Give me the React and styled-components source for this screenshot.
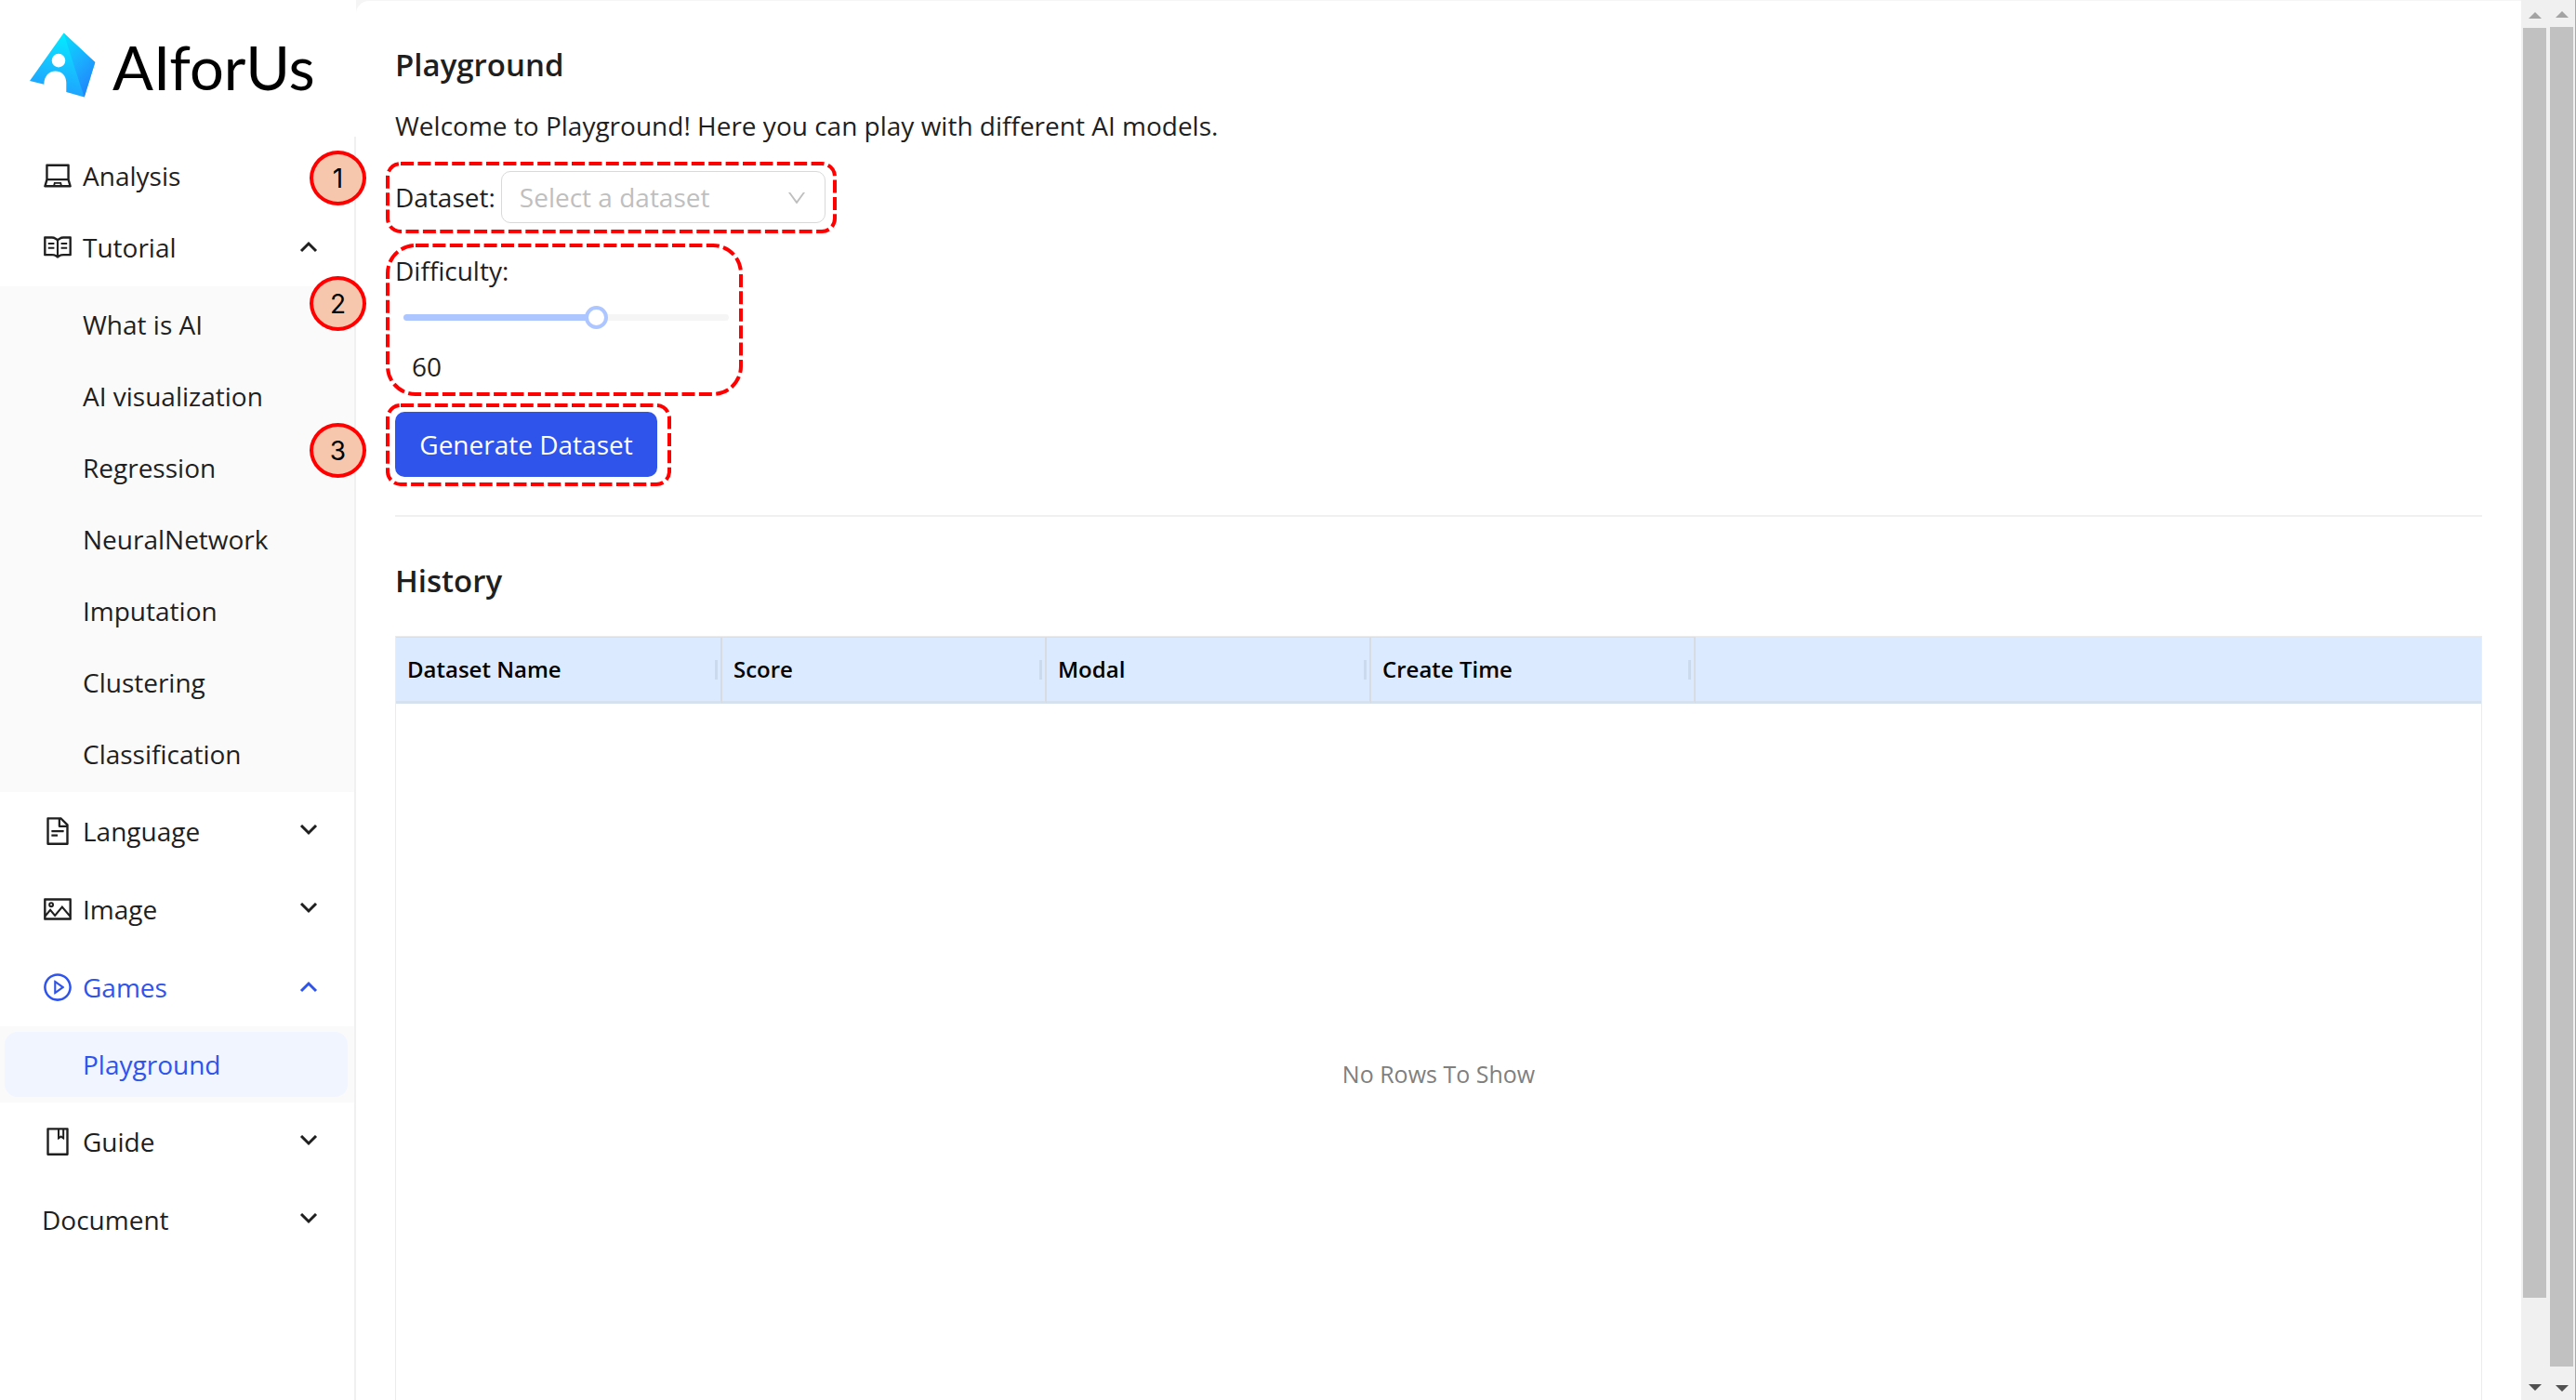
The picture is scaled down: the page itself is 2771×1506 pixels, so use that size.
import React, { useState } from "react";
import styled, { createGlobalStyle, css } from "styled-components";
import {
  AiOutlineLaptop,
  AiOutlineRead,
  AiOutlineFileText,
  AiOutlinePicture,
  AiOutlinePlayCircle,
  AiOutlineBook,
  AiOutlineDown,
} from "react-icons/ai";

const color = {
  text: "#1f1f1f",
  primary: "#2f54eb",
  selected: "#f0f5ff",
  line: "#f0f0f0",
  red: "#ff0000",
};

const GlobalStyle = createGlobalStyle`
  *, *::before, *::after { box-sizing: border-box; }
  body {
    margin: 0;
    overflow: hidden;
    background: #f5f5f5;
    color: ${color.text};
    font-family: "Open Sans", "Noto Sans", sans-serif;
    font-size: 28px;
    line-height: 44px;
  }
  button, input, select { font: inherit; color: inherit; }
`;

const Shell = styled.div`
  display: flex;
  height: 100vh;
  overflow: hidden;
`;

const Sidebar = styled.aside`
  flex: 0 0 383px;
  display: flex;
  flex-direction: column;
  background: #fff;
`;

const Brand = styled.a`
  display: flex;
  align-items: center;
  gap: 18px;
  height: 147px;
  padding: 0 0 8px 32px;
  color: #000;
  text-decoration: none;
`;

const BrandName = styled.span`
  padding-top: 4px;
  font-family: Lato, sans-serif;
  font-size: 65px;
  line-height: 72px;
`;

const Nav = styled.nav`
  flex: 1;
  padding-top: 7px;
  border-right: 2px solid ${color.line};
`;

const Menu = styled.ul`
  margin: 0;
  padding: 0;
  list-style: none;
`;

const MenuGroup = styled.li`
  padding-bottom: ${(p) => (p.$single ? 0 : 7)}px;
  padding-top: ${(p) => (p.$first ? 0 : 7)}px;
`;

const SubMenu = styled.ul`
  display: grid;
  gap: 7px;
  margin: 7px 0 -7px;
  padding: 6px 0;
  list-style: none;
  background: #fafafa;
`;

const itemBox = css`
  display: flex;
  align-items: center;
  gap: 10px;
  height: 70px;
  margin: 0 7px 0 5px;
  padding: 0 32px 0 40px;
  border: 0;
  border-radius: 14px;
  background: ${(p) => (p.$selected ? color.selected : "transparent")};
  color: ${(p) => (p.$active ? color.primary : "inherit")};
  text-align: left;
  text-decoration: none;
`;

const MenuButton = styled.button`
  ${itemBox}
  width: calc(100% - 12px);
  cursor: pointer;
  svg { flex: none; }
`;

const MenuLabel = styled.span`
  flex: 1;
`;

const SubLink = styled.a`
  ${itemBox}
  padding-left: 84px;
`;

const Main = styled.main`
  flex: 1;
  min-width: 0;
  margin-top: 1px;
  padding: 42px 42px 0;
  border-top-left-radius: 14px;
  background: #fff;
`;

const Title = styled.h1`
  margin: 0;
  font-size: 33px;
  font-weight: 600;
  line-height: 54px;
`;

const Intro = styled.p`
  margin: 16px 0 0;
`;

const Form = styled.form`
  display: flex;
  flex-direction: column;
  align-items: flex-start;
  padding-top: 17px;
`;

const Step = styled.div`
  position: relative;
  margin: ${(p) => p.$gap || 0}px 0 0 -10px;
  padding: ${(p) => p.$pad};
  width: ${(p) => p.$width}px;
  height: ${(p) => p.$height}px;
`;

const StepFrame = styled.svg`
  position: absolute;
  inset: 0;
  width: 100%;
  height: 100%;
  overflow: visible;
  pointer-events: none;
  rect {
    x: 2px;
    y: 2px;
    width: calc(100% - 4px);
    height: calc(100% - 4px);
    fill: none;
    stroke: ${color.red};
    stroke-width: 4px;
    stroke-dasharray: 14 4.4;
  }
`;

const StepBadge = styled.span`
  position: absolute;
  left: -82px;
  top: ${(p) => p.$top}px;
  display: grid;
  place-items: center;
  width: 61px;
  height: 59px;
  border: 4px solid ${color.red};
  border-radius: 50%;
  background: #f6c7ad;
  color: #000;
  font-family: Inter, sans-serif;
`;

const Field = styled.div`
  display: flex;
  align-items: center;
  gap: 6px;
`;

const SelectWrap = styled.div`
  position: relative;
  width: 349px;
  color: #bfbfbf;
  svg {
    position: absolute;
    right: 19px;
    top: 17px;
    pointer-events: none;
  }
`;

const Select = styled.select`
  appearance: none;
  width: 100%;
  height: 56px;
  padding: 0 50px 0 19px;
  border: 1px solid #d9d9d9;
  border-radius: 10px;
  background: #fff;
`;

const Range = styled.input`
  appearance: none;
  display: block;
  width: 350px;
  height: 25px;
  margin: 16px 0 0 9px;
  background: transparent;
  &::-webkit-slider-runnable-track {
    height: 7px;
    border-radius: 4px;
    background: linear-gradient(
      to right,
      #adc6ff ${(p) => p.value}%,
      #f5f5f5 ${(p) => p.value}%
    );
  }
  &::-webkit-slider-thumb {
    appearance: none;
    width: 25px;
    height: 25px;
    margin-top: -9px;
    border: 4px solid #adc6ff;
    border-radius: 50%;
    background: #fff;
  }
`;

const RangeLabel = styled.label`
  display: block;
`;

const RangeValue = styled.output`
  display: block;
  margin: 18px 0 0 18px;
`;

const PrimaryButton = styled.button`
  width: 282px;
  height: 70px;
  padding: 0;
  border: 0;
  border-radius: 10px;
  background: ${color.primary};
  color: #fff;
  cursor: pointer;
`;

const Divider = styled.hr`
  height: 2px;
  margin: 31px 0 42px;
  border: 0;
  background: ${color.line};
`;

const Grid = styled.table`
  width: 100%;
  margin-top: 32px;
  border: 1px solid #ececec;
  border-collapse: separate;
  border-spacing: 0;
  table-layout: fixed;
  font-size: 25px;
  line-height: 36px;
`;

const HeadCell = styled.th`
  width: ${(p) => (p.$filler ? "auto" : "349px")};
  height: 72px;
  padding: 0 3px 0 12px;
  border-top: 1px solid ${(p) => (p.$filler ? "#dbeaff" : "#dcdfe2")};
  border-right: ${(p) => (p.$filler ? "0" : "2px solid #d8dbe0")};
  border-bottom: 3px solid #d5e1ef;
  background: #dbeaff;
  color: #000;
  font-size: 24px;
  font-weight: 600;
  text-align: left;
  &:first-child { width: 351px; }
`;

const HeadInner = styled.div`
  display: flex;
  align-items: center;
  justify-content: space-between;
  &::after {
    content: "";
    width: 3px;
    height: 21px;
    background: #cbdaec;
  }
`;

const EmptyCell = styled.td`
  height: 796px;
  padding: 0;
  color: #7f7f7f;
  text-align: center;
`;

const ScrollTrack = styled.div`
  flex: 0 0 ${(p) => p.$width}px;
  display: flex;
  flex-direction: column;
  align-items: center;
  background: #f0f0f0;
`;

const ScrollArrow = styled.svg`
  flex: none;
  width: 14px;
  height: 7px;
  margin: ${(p) => p.$margin};
`;

const ScrollThumb = styled.div`
  flex: 0 1 ${(p) => p.$size}%;
  width: 25px;
  background: #c1c1c1;
`;

const ScrollRest = styled.div`
  flex: 1;
`;

const WindowEdge = styled.div`
  flex: 0 0 1px;
  background: #a9a9a9;
`;

const BrandMark = () => (
  <svg width="71" height="70" viewBox="0 0 71 70" aria-hidden="true">
    <defs>
      <linearGradient id="face" x1="0.65" y1="0" x2="0.4" y2="1">
        <stop offset="0" stopColor="#00f0ff" />
        <stop offset="0.5" stopColor="#16c4ff" />
        <stop offset="1" stopColor="#1f9dff" />
      </linearGradient>
      <linearGradient id="side" x1="0.1" y1="0" x2="0.6" y2="1">
        <stop offset="0" stopColor="#04dcfb" />
        <stop offset="0.5" stopColor="#1ab0ff" />
        <stop offset="1" stopColor="#1f86fb" />
      </linearGradient>
    </defs>
    <path
      fill="url(#face)"
      fillRule="evenodd"
      d="M36.500 0.500L70.300 32L58.700 69.500L39.300 64V54C39.300 46 34 41.500 27.500 41.500C20.500 41.500 15.500 47 15.300 55.800L0 52ZM31 22.800A7.300 7.300 0 1 0 31 37.400A7.300 7.300 0 1 0 31 22.800Z"
    />
    <path fill="url(#side)" d="M36.500 0.500L70.300 32L58.700 69.500L48 37Z" />
  </svg>
);

const Chevron = ({ open }) => (
  <svg width="20" height="14" viewBox="0 0 20 14" aria-hidden="true">
    <path
      d={open ? "M2 11L10 3L18 11" : "M2 1L10 9L18 1"}
      fill="none"
      stroke="currentColor"
      strokeWidth="3"
    />
  </svg>
);

const Frame = ({ radius }) => (
  <StepFrame aria-hidden="true">
    <rect rx={radius} />
  </StepFrame>
);

const Scrollbar = ({ width, size, top, bottom }) => (
  <ScrollTrack $width={width} aria-hidden="true">
    <ScrollArrow $margin={top} viewBox="0 0 14 7">
      <path d="M7 0L14 7H0Z" fill="#a3a3a3" />
    </ScrollArrow>
    <ScrollThumb $size={size} />
    <ScrollRest />
    <ScrollArrow $margin={bottom} viewBox="0 0 14 7">
      <path d="M0 0H14L7 7Z" fill="#505050" />
    </ScrollArrow>
  </ScrollTrack>
);

const menu = [
  { label: "Analysis", icon: AiOutlineLaptop, single: true },
  {
    label: "Tutorial",
    icon: AiOutlineRead,
    items: [
      "What is AI",
      "AI visualization",
      "Regression",
      "NeuralNetwork",
      "Imputation",
      "Clustering",
      "Classification",
    ],
  },
  { label: "Language", icon: AiOutlineFileText },
  { label: "Image", icon: AiOutlinePicture },
  { label: "Games", icon: AiOutlinePlayCircle, active: true, items: ["Playground"] },
  { label: "Guide", icon: AiOutlineBook },
  { label: "Document" },
];

const columns = ["Dataset Name", "Score", "Modal", "Create Time"];

export default function App() {
  const [difficulty, setDifficulty] = useState(60);
  return (
    <>
      <GlobalStyle />
      <Shell>
        <Sidebar>
          <Brand href="#home">
            <BrandMark />
            <BrandName>AIforUs</BrandName>
          </Brand>
          <Nav aria-label="Main">
            <Menu>
              {menu.map(({ label, icon: Icon, items, active, single }, i) => (
                <MenuGroup key={label} $single={single} $first={i === 0}>
                  <MenuButton
                    type="button"
                    $active={active}
                    aria-expanded={single ? undefined : Boolean(items)}
                  >
                    {Icon && <Icon size={34} />}
                    <MenuLabel>{label}</MenuLabel>
                    {!single && <Chevron open={Boolean(items)} />}
                  </MenuButton>
                  {items && (
                    <SubMenu>
                      {items.map((item) => (
                        <li key={item}>
                          <SubLink
                            href={`#${item}`}
                            $active={item === "Playground"}
                            $selected={item === "Playground"}
                          >
                            {item}
                          </SubLink>
                        </li>
                      ))}
                    </SubMenu>
                  )}
                </MenuGroup>
              ))}
            </Menu>
          </Nav>
        </Sidebar>
        <Main>
          <Title>Playground</Title>
          <Intro>Welcome to Playground! Here you can play with different AI models.</Intro>
          <Form onSubmit={(e) => e.preventDefault()}>
            <Step $width={485} $height={77} $pad="10px 10px">
              <Frame radius={14} />
              <StepBadge $top={-12}>1</StepBadge>
              <Field>
                <label htmlFor="dataset">Dataset:</label>
                <SelectWrap>
                  <Select id="dataset" defaultValue="">
                    <option value="">Select a dataset</option>
                  </Select>
                  <AiOutlineDown size={24} />
                </SelectWrap>
              </Field>
            </Step>
            <Step $width={384} $height={164} $gap={11} $pad="7px 10px">
              <Frame radius={30} />
              <StepBadge $top={35}>2</StepBadge>
              <RangeLabel htmlFor="difficulty">Difficulty:</RangeLabel>
              <Range
                id="difficulty"
                type="range"
                min="0"
                max="100"
                value={difficulty}
                onChange={(e) => setDifficulty(Number(e.target.value))}
              />
              <RangeValue htmlFor="difficulty">{difficulty}</RangeValue>
            </Step>
            <Step $width={307} $height={89} $gap={8} $pad="9px 10px">
              <Frame radius={14} />
              <StepBadge $top={21}>3</StepBadge>
              <PrimaryButton type="submit">Generate Dataset</PrimaryButton>
            </Step>
          </Form>
          <Divider />
          <Title as="h2">History</Title>
          <Grid>
            <thead>
              <tr>
                {columns.map((name) => (
                  <HeadCell key={name} scope="col">
                    <HeadInner>{name}</HeadInner>
                  </HeadCell>
                ))}
                <HeadCell as="td" $filler />
              </tr>
            </thead>
            <tbody>
              <tr>
                <EmptyCell colSpan={5}>No Rows To Show</EmptyCell>
              </tr>
            </tbody>
          </Grid>
        </Main>
        <Scrollbar width={29} size={90.7} top="13px 0 10px" bottom="0 0 10px" />
        <Scrollbar width={29} size={95.7} top="12px 0 10px" bottom="0 0 9px" />
        <WindowEdge />
      </Shell>
    </>
  );
}
